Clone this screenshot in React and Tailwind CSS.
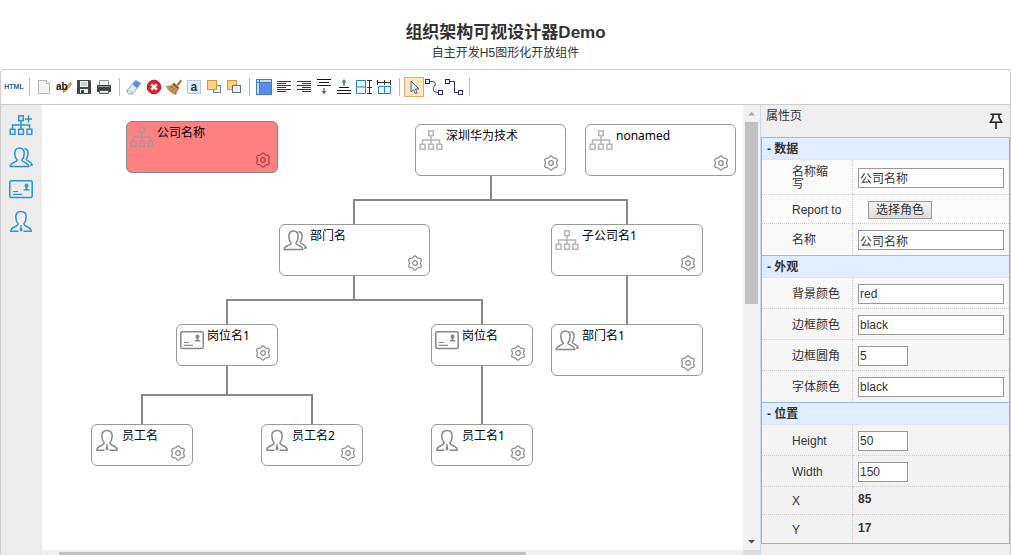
import { useState } from "react";

// ================= SHAPE ICONS =================
const OrgIcon = ({ plus, className }) => (
  <svg viewBox="0 0 24 24" fill="none" stroke="currentColor" strokeWidth="1.5" className={className}>
    <rect x="9.7" y="2.8" width="4.6" height="4.8" />
    <path d="M12 7.6V16M3.5 16v-4h17v4" />
    <rect x="1.2" y="16.3" width="4.8" height="5" />
    <rect x="9.6" y="16.3" width="4.8" height="5" />
    <rect x="18" y="16.3" width="4.8" height="5" />
    {plus && <path d="M16 6h7M19.5 2.5v7" />}
  </svg>
);

const GroupIcon = ({ className }) => (
  <svg viewBox="0 0 24 24" fill="none" stroke="currentColor" strokeWidth="1.5" strokeLinejoin="round" className={className}>
    <path d="M8.3 15.2C6.6 13.5 5.8 11 5.8 8.5C5.8 5 7.5 2.9 10.5 2.9S15.2 5 15.2 8.5C15.2 11 14.4 13.5 12.8 15.2C13 17.3 19.5 17.3 19.8 21.6H1.1C1.4 17.3 8 17.3 8.3 15.2Z" />
    <path d="M15.5 3.6C18.3 4.2 19.3 6.5 19 9.3C18.8 11.6 18.2 12.8 17.2 14.2C17.4 16.2 22.8 16.4 23.3 20H21" />
  </svg>
);

const CardIcon = ({ className }) => (
  <svg viewBox="0 0 24 24" fill="none" stroke="currentColor" strokeWidth="1.5" className={className}>
    <rect x="0.8" y="3.8" width="22.4" height="16.8" rx="1.5" />
    <path d="M4 14.5h5M4 17.3h9" strokeWidth="1.2" />
    <path d="M17.5 6.500c1.2 0 1.9.9 1.9 2s-.5 1.700-1 2.200v1.100l2.100.8v1h-6v-1l2.100-.8v-1.100c-.5-.5-1-1.100-1-2.200s.7-2 1.900-2z" fill="currentColor" stroke="none" />
  </svg>
);

const PersonIcon = ({ className }) => (
  <svg viewBox="0 0 24 24" fill="none" stroke="currentColor" strokeWidth="1.5" strokeLinejoin="round" className={className}>
    <path d="M9.5 22.3H1.7C1.9 17.3 8.8 18.2 9.2 14.8C7.5 13 6.8 10.7 6.8 8C6.8 4.6 8.7 2.5 12 2.5S17.2 4.6 17.2 8C17.2 10.7 16.5 13 14.8 14.8C15.2 18.2 22.1 17.3 22.3 22.3H14.5" />
    <path d="M10.8 16.3h2.4l-.6 1.5.9 3.2L12 22.8 10.5 21l.9-3.2z" fill="currentColor" stroke="none" />
  </svg>
);

const GearIcon = ({ className }) => (
  <svg viewBox="0 0 16 16" fill="none" stroke="currentColor" strokeWidth="1.2" strokeLinejoin="round" className={className}>
    <path d="M8 .8C9.2 .8 9.6 2.9 10.8 3C12 3.100 13.500 2.900 14.200 4.200C14.900 5.500 13.500 6.800 13.500 8C13.500 9.200 14.900 10.500 14.200 11.800C13.500 13.100 12 12.900 10.800 13C9.600 13.100 9.200 15.200 8 15.200C6.800 15.200 6.400 13.100 5.200 13C4 12.900 2.500 13.100 1.800 11.800C1.100 10.500 2.500 9.200 2.500 8C2.500 6.800 1.100 5.500 1.800 4.200C2.500 2.900 4 3.100 5.200 3C6.400 2.900 6.800 .8 8 .8Z" />
    <circle cx="8" cy="8" r="2.3" />
  </svg>
);

const PinIcon = ({ className }) => (
  <svg viewBox="0 0 16 16" fill="none" stroke="currentColor" strokeWidth="1.6" className={className}>
    <path d="M2.5 1.3h11M5 1.5v3.2L2.4 9.2h11.200L11 4.700V1.500M8 9.200V16" />
  </svg>
);

const icons = { org: OrgIcon, group: GroupIcon, card: CardIcon, person: PersonIcon };

// ================= TOOLBAR =================
const Glyph = ({ children }) => (
  <svg viewBox="0 0 16 16" fill="none" className="size-4">
    {children}
  </svg>
);

const toolGroups = [
  [
    {
      name: "HTML",
      icon: <span className="text-[7px] font-bold text-[#2c5f96]">HTML</span>,
    },
  ],
  [
    {
      name: "New",
      icon: (
        <Glyph>
          <path d="M2.5 1.5h8l3 3v10h-11z" fill="#f3f3f3" stroke="#b5b5b5" />
          <path d="M10.5 1.5v3h3" fill="#fff" stroke="#b5b5b5" />
        </Glyph>
      ),
    },
    {
      name: "Rename",
      icon: (
        <Glyph>
          <path d="M7 13.5l1-3 6-7 1.800 1.600-6 7z" fill="#f0b070" stroke="#a45f23" strokeWidth=".7" />
          <text x="0" y="11" fontSize="10" fontWeight="bold" fill="#111">ab</text>
        </Glyph>
      ),
    },
    {
      name: "Save",
      icon: (
        <Glyph>
          <path d="M1 1h13l1 1v13H1z" fill="#40474c" />
          <path d="M4 2h8v6H4zM4 10h8v4H4z" fill="#eef1f2" />
          <path d="M5 11h3v3H5z" fill="#40474c" />
          <path d="M5 4h6M5 6h6" stroke="#a8b0b4" />
        </Glyph>
      ),
    },
    {
      name: "Print",
      icon: (
        <Glyph>
          <path d="M3.5 1.5h9v5h-9z" fill="#f4f8fa" stroke="#8c969b" />
          <path d="M1 6h14v7H1z" fill="#3b4043" />
          <path d="M2 7.5h12" stroke="#8d9498" />
          <path d="M3.5 11.5h9v3h-9z" fill="#dfe5e8" stroke="#555c60" />
        </Glyph>
      ),
    },
  ],
  [
    {
      name: "Erase",
      icon: (
        <Glyph>
          <path d="M.8 11.500L9.500 1.200L15 4.500L6.500 14.800H2.500z" fill="#dcecfc" stroke="#7f93b5" strokeWidth=".8" />
          <path d="M6.500 5.500L10 1.500L14.500 4.500L10.800 9z" fill="#5d8dd6" />
          <path d="M.8 11.500L5.500 12.500L6.500 14.800H2.500z" fill="#fff" stroke="#8298b5" strokeWidth=".7" />
        </Glyph>
      ),
    },
    {
      name: "Delete",
      icon: (
        <Glyph>
          <circle cx="8" cy="8" r="6.8" fill="#dc2430" stroke="#b81822" />
          <path d="M5.3 5.3l5.400 5.400M10.700 5.300l-5.400 5.400" stroke="#fff" strokeWidth="2.400" />
        </Glyph>
      ),
    },
    {
      name: "Clean",
      icon: (
        <Glyph>
          <path d="M10.500 5.500L14.500 .5L16 2L12.500 7z" fill="#b5763c" />
          <path d="M.5 7.500C4 7.500 6.500 6 8 4L13 8.500C11.500 10.500 10.500 12 10 15.500C6 14.500 2.500 12 .5 7.500z" fill="#cf9a58" stroke="#9a6632" strokeWidth=".7" />
          <path d="M7.300 4.800L12.500 9.500" stroke="#6d4824" strokeWidth="1.300" />
          <path d="M3 9.500L8 7.500M5.500 12L9.500 9M8.500 14L11 10.500" stroke="#8a5a2a" strokeWidth=".8" />
        </Glyph>
      ),
    },
    {
      name: "Select text",
      icon: (
        <Glyph>
          <rect x="1.5" y="1.5" width="13" height="13" fill="#e6f0fc" stroke="#93b4de" strokeDasharray="2 1" />
          <text x="4.500" y="11.500" fontSize="12" fontWeight="bold" fill="#20364f">a</text>
        </Glyph>
      ),
    },
    {
      name: "Bring to front",
      icon: (
        <Glyph>
          <rect x="7.5" y="6.5" width="7" height="7" fill="#eaf0f8" stroke="#7082a5" />
          <rect x="1.5" y="1.5" width="9" height="9" fill="#fbd276" stroke="#c99a42" />
        </Glyph>
      ),
    },
    {
      name: "Send to back",
      icon: (
        <Glyph>
          <rect x="1.5" y="1.5" width="9" height="9" fill="#fbd276" stroke="#c99a42" />
          <rect x="6.5" y="6.5" width="8" height="7" fill="#eaf0f8" stroke="#5c719c" />
        </Glyph>
      ),
    },
  ],
  [
    {
      name: "Select all",
      icon: (
        <Glyph>
          <rect x=".5" y=".5" width="15" height="15" fill="#c5ddfa" stroke="#357fcb" />
          <path d="M3.5 0v16M0 3.500h16" stroke="#357fcb" />
          <rect x="4" y="4" width="11" height="11" fill="#5b8ceb" />
        </Glyph>
      ),
    },
    {
      name: "Align left",
      icon: (
        <Glyph>
          <path d="M1 2.5h14M1 4.500h9M1 6.500h14M1 8.500h9M1 10.500h14M1 12.500h9" stroke="#333" />
        </Glyph>
      ),
    },
    {
      name: "Align right",
      icon: (
        <Glyph>
          <path d="M1 2.5h14M6 4.500h9M1 6.500h14M6 8.500h9M1 10.500h14M6 12.500h9" stroke="#333" />
        </Glyph>
      ),
    },
    {
      name: "Align bottom",
      icon: (
        <Glyph>
          <path d="M1 .5h14M3 3.500h10M1 6.500h14" stroke="#111" />
          <path d="M8 9v4" stroke="#5470a0" strokeWidth="1.500" />
          <path d="M5.500 12h5L8 15.500z" fill="#5470a0" />
        </Glyph>
      ),
    },
    {
      name: "Align top",
      icon: (
        <Glyph>
          <path d="M8 2v4.500" stroke="#5470a0" strokeWidth="1.500" />
          <path d="M5.500 3.500h5L8 0z" fill="#5470a0" />
          <path d="M3 8.500h10M1 11.500h14M1 14.500h14" stroke="#111" />
        </Glyph>
      ),
    },
    {
      name: "Same height",
      icon: (
        <Glyph>
          <path d="M.5 1.500h9v13h-9zM.5 8h9" stroke="#2384d0" fill="#edf7ff" />
          <path d="M13.500 1v14M11 1.500h5M11 8.500h5M11 14.500h5" stroke="#333" />
        </Glyph>
      ),
    },
    {
      name: "Same width",
      icon: (
        <Glyph>
          <path d="M1 3.500h14M1.500 1v5M8.500 1v5M14.500 1v5" stroke="#333" />
          <path d="M2.500 7.500h12v7h-12z" stroke="#2384d0" fill="#edf7ff" />
          <path d="M8.500 7.500v7" stroke="#2384d0" />
        </Glyph>
      ),
    },
  ],
  [
    {
      name: "Pointer",
      icon: (
        <Glyph>
          <path d="M5 2v11l2.600-2.300 1.700 4 1.900-.9-1.700-3.800H13z" fill="#dbe6f3" stroke="#57606e" strokeLinejoin="round" />
        </Glyph>
      ),
    },
    {
      name: "Curve",
      icon: (
        <svg viewBox="0 0 20 16" fill="none" stroke="#252c60" className="h-4 w-5">
          <rect x="1.5" y=".5" width="4" height="4" />
          <path d="M6 2.500C9 2.500 12.500 3 11 6C9.500 9 7 13 14 13.500" />
          <rect x="14.5" y="11.5" width="4" height="4" />
        </svg>
      ),
    },
    {
      name: "Polyline",
      icon: (
        <svg viewBox="0 0 20 16" fill="none" stroke="#252c60" className="h-4 w-5">
          <rect x="1.5" y=".5" width="4" height="4" />
          <path d="M6 2.500h4.500v11h4" />
          <rect x="14.5" y="11.5" width="4" height="4" />
        </svg>
      ),
    },
  ],
];

const Toolbar = () => {
  const [tool, setTool] = useState("Pointer");

  return (
    <div className="flex h-[35px] shrink-0 items-center border-b border-[#ccc] pl-[3px]">
      {toolGroups.map((group, i) => (
        <div key={i} className="flex items-center">
          {group.map((item) => (
            <button
              key={item.name}
              type="button"
              aria-label={item.name}
              onClick={() => setTool(item.name)}
              className={
                item.name === tool
                  ? "flex size-5 items-center justify-center border border-[#e0ad6c] bg-[#ffe8bd]"
                  : "flex size-5 items-center justify-center"
              }
            >
              {item.icon}
            </button>
          ))}
          <div className="flex w-2.5 justify-center">
            <div className="h-[18px] w-px bg-[#bbb]"></div>
          </div>
        </div>
      ))}
    </div>
  );
};

// ================= CANVAS =================
const nodes = [
  { x: 84, y: 16, w: 152, h: 52, icon: "org", label: "公司名称", selected: true },
  { x: 373, y: 19, w: 151, h: 52, icon: "org", label: "深圳华为技术" },
  { x: 543, y: 19, w: 151, h: 52, icon: "org", label: "nonamed" },
  { x: 237, y: 119, w: 151, h: 52, icon: "group", label: "部门名" },
  { x: 509, y: 119, w: 152, h: 52, icon: "org", label: "子公司名1" },
  { x: 134, y: 219, w: 102, h: 42, icon: "card", label: "岗位名1" },
  { x: 389, y: 219, w: 102, h: 42, icon: "card", label: "岗位名" },
  { x: 509, y: 219, w: 152, h: 52, icon: "group", label: "部门名1" },
  { x: 49, y: 319, w: 102, h: 42, icon: "person", label: "员工名" },
  { x: 219, y: 319, w: 102, h: 42, icon: "person", label: "员工名2" },
  { x: 389, y: 319, w: 102, h: 42, icon: "person", label: "员工名1" },
];

const edges = [
  "M449 71V95M312 119V95H585V119",
  "M312 171V195M185 219V195H440V219",
  "M585 171V219",
  "M185 261V290M100 319V290H270V319",
  "M440 261V319",
];

const OrgNode = ({ node }) => {
  const Icon = icons[node.icon];
  return (
    <div
      className={
        node.selected
          ? "absolute flex rounded-md border border-[#888] bg-[#ff8080]"
          : "absolute flex rounded-md border border-[#999] bg-white"
      }
      style={{ left: node.x, top: node.y, width: node.w, height: node.h }}
    >
      <Icon
        className={
          node.icon === "org"
            ? "mt-[3px] ml-[3px] size-6 shrink-0 text-[#999] opacity-70"
            : "mt-[3px] ml-[3px] size-6 shrink-0 text-[#888]"
        }
      />
      <span className="ml-[3px] whitespace-nowrap pt-[3px] font-['Noto_Sans','Noto_Sans_CJK_SC',sans-serif] text-xs leading-4 text-black">
        {node.label}
      </span>
      <GearIcon
        className={
          node.selected
            ? "absolute right-1.5 bottom-1 size-4 text-[#a04545]"
            : "absolute right-1.5 bottom-1 size-4 text-[#888]"
        }
      />
    </div>
  );
};

const Canvas = () => (
  <div className="flex min-w-0 flex-1 flex-col">
    <div className="flex min-h-0 flex-1">
      <div className="relative min-w-0 flex-1 overflow-hidden bg-white">
        <svg className="absolute inset-0 size-full" fill="none" stroke="#888" strokeWidth="2">
          {edges.map((d) => (
            <path key={d} d={d} />
          ))}
        </svg>
        {nodes.map((node) => (
          <OrgNode key={node.label} node={node} />
        ))}
      </div>

      {/* vertical scrollbar */}
      <div className="flex w-[17px] flex-col items-center bg-[#f1f1f1]">
        <svg viewBox="0 0 17 17" className="h-[17px] w-full shrink-0">
          <path d="M5 10.5L8.500 7l3.500 3.500z" fill="#a3a9b2" />
        </svg>
        <div className="h-[182px] w-[13px] bg-[#c1c1c1]"></div>
        <svg viewBox="0 0 17 17" className="mt-auto h-[17px] w-full shrink-0">
          <path d="M5 7l3.500 3.500L12 7z" fill="#505050" />
        </svg>
      </div>
    </div>

    {/* horizontal scrollbar */}
    <div className="flex h-[5px] shrink-0 bg-[#f1f1f1] pl-[17px]">
      <div className="mt-0.5 w-2/3 bg-[#c1c1c1]"></div>
      <div className="ml-auto w-[17px] bg-[#dcdcdc]"></div>
    </div>
  </div>
);

// ================= PROPERTIES =================
const sections = [
  {
    title: "数据",
    rows: [
      { id: "short", label: "名称缩写", value: "公司名称", type: "text", height: "h-[35px]" },
      { id: "report", label: "Report to", value: "选择角色", type: "button", height: "h-[29px]" },
      { id: "name", label: "名称", value: "公司名称", type: "text", height: "h-[31px]" },
    ],
  },
  {
    title: "外观",
    rows: [
      { id: "bg", label: "背景颜色", value: "red", type: "text", height: "h-[31px]" },
      { id: "border", label: "边框颜色", value: "black", type: "text", height: "h-[31px]" },
      { id: "radius", label: "边框圆角", value: "5", type: "number", height: "h-[31px]" },
      { id: "font", label: "字体颜色", value: "black", type: "text", height: "h-[31px]" },
    ],
  },
  {
    title: "位置",
    rows: [
      { id: "height", label: "Height", value: "50", type: "number", height: "h-[31px]" },
      { id: "width", label: "Width", value: "150", type: "number", height: "h-[31px]" },
      { id: "x", label: "X", value: "85", type: "static", height: "h-7" },
      { id: "y", label: "Y", value: "17", type: "static", height: "h-7" },
    ],
  },
];

const PropertyValue = ({ row }) => {
  if (row.type === "button") {
    return (
      <button
        id={row.id}
        type="button"
        className="ml-2.5 block h-[18px] border border-[#999] bg-linear-to-b from-[#f4f4f4] to-[#dcdcdc] px-[7px] leading-4"
      >
        {row.value}
      </button>
    );
  }
  if (row.type === "static") {
    return <output id={row.id} className="block pb-1 font-bold">{row.value}</output>;
  }
  return (
    <input
      id={row.id}
      type="text"
      defaultValue={row.value}
      className={
        row.type === "number"
          ? "block h-5 w-[50px] border border-[#999] bg-white px-px"
          : "block h-5 w-full border border-[#999] bg-white px-px"
      }
    />
  );
};

const PropertyPanel = () => (
  <aside className="flex w-[250px] shrink-0 flex-col border-l border-[#c9d8ea] bg-[#efefef]">
    <div className="flex h-8 shrink-0 justify-between pr-1.5 pl-[5px]">
      <h2 className="pt-[3px] leading-4">属性页</h2>
      <button type="button" aria-label="Pin" className="text-[#222]">
        <PinIcon className="size-4" />
      </button>
    </div>
    <div className="border-x border-b border-[#8fb4d9]">
      <table className="w-full table-fixed border-separate border-spacing-0 bg-linear-to-b from-[#fcfcfc] to-[#f1f1f1]">
        <colgroup>
          <col className="w-[91px]" />
          <col />
        </colgroup>
        {sections.map((section) => (
          <tbody key={section.title}>
            <tr>
              <th
                colSpan={2}
                className="h-[23px] border-t border-b border-t-[#99bbe8] border-b-[#d5dde8] bg-[#e0ecff] px-[5px] text-left leading-4 font-bold [border-bottom-style:dotted]"
              >
                - {section.title}
              </th>
            </tr>
            {section.rows.map((row, i) => {
              const line = i === section.rows.length - 1 ? "" : "border-b border-b-[#ccc]";
              return (
                <tr key={row.id} className={row.height}>
                  <td className={`border-r border-dotted border-r-[#ccc] pt-px pr-2.5 pl-[30px] leading-3 ${line}`}>
                    <label htmlFor={row.id}>
                      {row.id === "short" ? <>名称缩<br />写</> : row.label}
                    </label>
                  </td>
                  <td className={`border-dotted px-[5px] pt-px ${line}`}>
                    <PropertyValue row={row} />
                  </td>
                </tr>
              );
            })}
          </tbody>
        ))}
      </table>
    </div>
  </aside>
);

const App = () => {
  return (
    <div className="flex h-screen flex-col bg-white font-['Liberation_Sans','Noto_Sans_CJK_SC',sans-serif] text-xs text-[#333]">
      {/* HEADER */}
      <header className="pt-[21px] pb-2 text-center">
        <h1 className="text-[17px] leading-6 font-bold">组织架构可视设计器Demo</h1>
        <p className="leading-4">自主开发H5图形化开放组件</p>
      </header>

      {/* DESIGNER */}
      <div className="flex min-h-0 flex-1 flex-col rounded-t-sm border border-b-0 border-[#ccc]">
        <Toolbar />
        <div className="flex min-h-0 flex-1">
          <nav className="flex w-[41px] shrink-0 flex-col items-center gap-2 bg-[#ececec] pt-2 pr-0.5 text-[#2a95d0]">
            <button type="button" aria-label="公司"><OrgIcon plus className="size-6" /></button>
            <button type="button" aria-label="部门"><GroupIcon className="size-6" /></button>
            <button type="button" aria-label="岗位"><CardIcon className="size-6" /></button>
            <button type="button" aria-label="员工"><PersonIcon className="size-6" /></button>
          </nav>
          <Canvas />
          <PropertyPanel />
        </div>
      </div>
    </div>
  );
};

export default App;
